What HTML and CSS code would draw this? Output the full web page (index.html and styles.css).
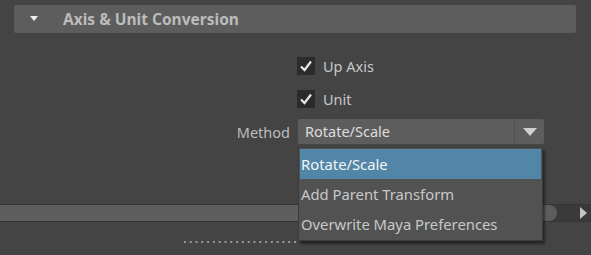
FILE: index.html
```html
<!doctype html>
<html>
<head>
<meta charset="utf-8">
<title>Axis &amp; Unit Conversion</title>
<link rel="stylesheet" href="styles.css">
</head>
<body>
<div class="panel">
	<div class="frame_head">
		<span class="fold"></span>
		<span class="frame_title">Axis &amp; Unit Conversion</span>
	</div>

	<div class="options">
		<div class="row check_row">
			<span class="label"></span>
			<span class="checkbox"><svg width="18" height="18" viewBox="0 0 18 18"><path d="M4 9.5 L7.5 13 L14 4.5" fill="none" stroke="#e6e6e6" stroke-width="2.2"/></svg></span>
			<span class="check_text">Up Axis</span>
		</div>
		<div class="row check_row">
			<span class="label"></span>
			<span class="checkbox"><svg width="18" height="18" viewBox="0 0 18 18"><path d="M4 9.5 L7.5 13 L14 4.5" fill="none" stroke="#e6e6e6" stroke-width="2.2"/></svg></span>
			<span class="check_text">Unit</span>
		</div>
		<div class="row combo_row">
			<span class="label">Method</span>
			<div class="combo">
				<span class="combo_value">Rotate/Scale</span>
				<span class="combo_btn"><span class="arrow_down"></span></span>
			</div>
		</div>
	</div>

	<div class="hscroll">
		<div class="thumb"></div>
		<span class="arrow_right"></span>
	</div>

	<div class="dots"></div>
</div>

<ul class="popup">
	<li class="active">Rotate/Scale</li>
	<li>Add Parent Transform</li>
	<li>Overwrite Maya Preferences</li>
</ul>
</body>
</html>
```

FILE: styles.css
```css
body{ margin:0; background-color:#444444; font-family:"Noto Sans","Open Sans",sans-serif; font-size:14px; color:#c8c8c8; overflow:hidden;}
.panel{ width:591px; height:255px; display:flex; flex-direction:column;}

.frame_head{
	margin:5px 15px 0 14px;
	height:28px;
	background-color:#5d5d5d;
	border-radius:2px;
	display:flex;
	align-items:center;
}
.fold{
	width:0; height:0;
	margin-left:16px;
	border-left:4.5px solid transparent;
	border-right:4.5px solid transparent;
	border-top:5px solid #eeeeee;
	margin-bottom:2px;
}
.frame_title{
	margin-left:25px;
	font-size:15.5px;
	font-weight:bold;
	color:#bcbcbc;
}

.options{ margin-top:24px; display:flex; flex-direction:column;}
.row{ display:flex; align-items:center;}
.label{ width:297px; flex:none; text-align:right; padding-right:7px; box-sizing:border-box;}
.check_row{ height:18px; margin-bottom:15px;}
.check_row + .check_row{ margin-bottom:11px;}
.checkbox{ width:18px; height:18px; background-color:#2b2b2b; display:block;}
.checkbox svg{ display:block;}
.check_text{ margin-left:8px; font-size:14.5px;}

.combo_row{ height:25px;}
.combo_row .label{ font-size:14.5px; color:#bdbdbd;}
.combo{
	width:246px;
	height:25px;
	background-color:#5d5d5d;
	border-radius:2px;
	display:flex;
	margin-left:1px;
}
.combo_value{ flex:1; padding-left:7px; line-height:25px; color:#dddddd; font-size:14.5px;}
.combo_btn{
	width:29px;
	border-left:1px solid #505050;
	display:flex;
	align-items:center;
	justify-content:center;
}
.arrow_down{
	width:0; height:0;
	border-left:7px solid transparent;
	border-right:7px solid transparent;
	border-top:8px solid #cfcfcf;
}

.hscroll{
	margin-top:60px;
	height:16px;
	border-top:1px solid #353535;
	border-bottom:1px solid #353535;
	background-color:#3a3a3a;
	display:flex;
	align-items:center;
}
.thumb{
	width:557px;
	height:16px;
	background-color:#5d5d5d;
	border-radius:0 8px 8px 0;
}
.arrow_right{
	width:0; height:0;
	margin-left:23px;
	border-top:6px solid transparent;
	border-bottom:6px solid transparent;
	border-left:7px solid #c4c4c4;
}

.dots{
	margin:19px 0 0 182px;
	width:115px;
	height:2px;
	background-image:radial-gradient(circle, #9a9a9a 0.9px, transparent 1.2px);
	background-size:5.8px 2px;
	background-repeat:repeat-x;
}

.popup{
	position:absolute;
	left:298px;
	top:147px;
	width:241px;
	margin:0;
	padding:1px;
	list-style:none;
	background-color:#525252;
	border:1px solid #3c3c3c;
	box-shadow:2px 3px 2px rgba(0,0,0,0.45);
}
.popup li{
	height:30px;
	line-height:30px;
	padding-left:1px;
	font-size:14.8px;
	color:#c8c8c8;
}
.popup li.active{ background-color:#5286a8; color:#f4f4f4;}
```
